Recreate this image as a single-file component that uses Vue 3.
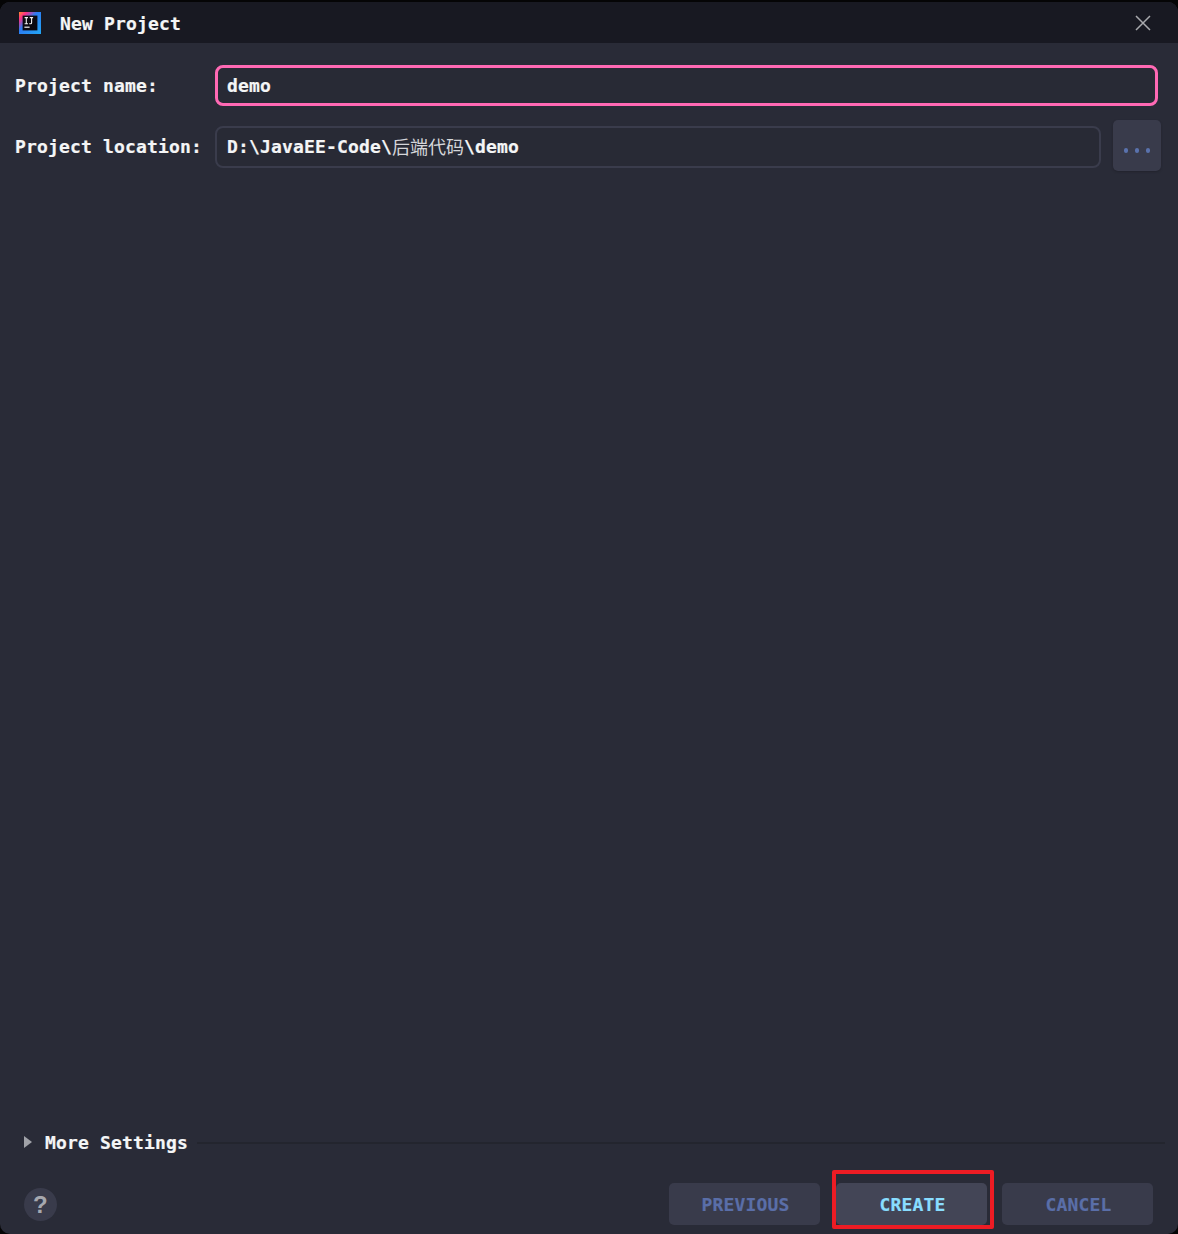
<script setup>
const labelName = 'Project name:'
const labelLocation = 'Project location:'
</script>

<template>
  <div class="window">
    <header class="titlebar">
      <svg class="logo" width="24" height="24" viewBox="0 0 24 24" aria-hidden="true">
        <defs>
          <linearGradient id="ijg" x1="0" y1="0" x2="1" y2="1">
            <stop offset="0" stop-color="#ff8a2a" />
            <stop offset="0.18" stop-color="#fe2e87" />
            <stop offset="0.42" stop-color="#2c7bf2" />
            <stop offset="1" stop-color="#22a7f5" />
          </linearGradient>
        </defs>
        <rect x="1" y="1" width="22" height="22" fill="url(#ijg)" />
        <rect x="4.6" y="4.6" width="14.8" height="14.8" fill="#0b0910" />
        <path d="M6.6 6.6h3.4M8.3 6.6v6.2M6.6 12.8h3.4M13.6 6.6v5.2q0 1-1 1h-1.4M11.7 6.6h3.4" fill="none" stroke="#f2f2f2" stroke-width="1.1" />
        <rect x="6.4" y="15.6" width="5.2" height="1.2" fill="#f2f2f2" />
      </svg>
      <span class="title">New Project</span>
      <svg class="close" width="16" height="16" viewBox="0 0 16 16" aria-hidden="true">
        <path d="M1 1l14 14M15 1L1 15" stroke="#a8a9ad" stroke-width="1.5" fill="none" />
      </svg>
    </header>

    <main class="body">
      <div class="row row-name">
        <label class="label">{{ labelName }}</label>
        <div class="input input-focus">demo</div>
      </div>
      <div class="row row-location">
        <label class="label label-shift">{{ labelLocation }}</label>
        <div class="input input-plain">D:\JavaEE-Code\<span class="cjk">后端代码</span>\demo</div>
        <button class="browse" type="button"><i></i><i></i><i></i></button>
      </div>
      <div class="spacer"></div>
      <div class="more">
        <svg width="8" height="12" viewBox="0 0 8 12" aria-hidden="true"><path d="M0 0L8 6L0 12Z" fill="#a0a2a8" /></svg>
        <span class="more-label">More Settings</span>
        <span class="rule"></span>
      </div>
      <footer class="footer">
        <div class="help">?</div>
        <div class="actions">
          <button class="btn" type="button">PREVIOUS</button>
          <div class="create-wrap">
            <button class="btn btn-primary" type="button">CREATE</button>
            <span class="highlight"></span>
          </div>
          <button class="btn" type="button">CANCEL</button>
        </div>
      </footer>
    </main>
  </div>
</template>

<style>
html, body { margin: 0; background: #050506; }
</style>

<style scoped>
.window {
  box-sizing: border-box;
  width: 1178px;
  margin-top: 2px;
  height: 1232px;
  border-radius: 10px;
  overflow: hidden;
  background: #292b37;
  display: flex;
  flex-direction: column;
  font-family: "DejaVu Sans Mono", "Noto Sans CJK SC", monospace;
  font-weight: 700;
  font-size: 18px;
  letter-spacing: 0.16px;
  color: #f4f5f6;
  -webkit-text-stroke: 0.2px currentColor;
}
.titlebar {
  height: 41px;
  flex: none;
  background: #181922;
  display: flex;
  align-items: center;
  padding: 0 27px 0 18px;
}
.logo { flex: none; }
.title { margin-left: 18px; margin-top: 2px; }
.close { margin-left: auto; }
.body {
  flex: 1;
  display: flex;
  flex-direction: column;
  min-height: 0;
}
.row { display: flex; align-items: center; padding-left: 15px; }
.row-name { margin-top: 22px; padding-right: 20px; }
.row-location { margin-top: 14px; padding-right: 17px; }
.label { width: 200px; flex: none; }
.label-shift { margin-top: 2px; }
.input {
  box-sizing: border-box;
  background: #282a35;
  display: flex;
  align-items: center;
  white-space: pre;
}
.input-focus {
  flex: 1;
  height: 41px;
  border: 3px solid #ff69b4;
  border-radius: 8px;
  padding-left: 9px;
}
.input-plain {
  flex: 1;
  height: 42px;
  margin-top: 3px;
  border: 2px solid #3a3c4c;
  border-radius: 8px;
  padding: 0 0 2px 10px;
}
.cjk {
  font-family: "Noto Sans CJK SC", sans-serif;
  font-weight: 400;
  color: #d5d6da;
  letter-spacing: 0;
  -webkit-text-stroke: 0;
}
.browse {
  box-sizing: border-box;
  flex: none;
  width: 48px;
  height: 51px;
  margin-left: 12px;
  border: 0;
  border-radius: 5px;
  background: #393b4b;
  display: flex;
  align-items: center;
  justify-content: center;
  gap: 6.5px;
  padding: 10px 0 0;
  box-shadow: 0 1px 2px #22232d;
}
.browse i { width: 4.5px; height: 4.5px; border-radius: 50%; background: #5a72ad; }
.spacer { flex: 1; }
.more {
  display: flex;
  align-items: center;
  padding: 0 13px 0 24px;
  height: 20px;
}
.more-label { margin-left: 13px; }
.rule { flex: 1; height: 2px; margin-left: 9px; background: #23252e; margin-top: 2px; }
.footer {
  display: flex;
  align-items: center;
  justify-content: space-between;
  padding: 31px 25px 9px 24px;
}
.help {
  width: 33px;
  height: 33px;
  margin-top: 1px;
  border-radius: 50%;
  background: #393b4b;
  color: #a6a8af;
  display: flex;
  align-items: center;
  justify-content: center;
  font-family: "Liberation Sans", sans-serif;
  font-size: 24px;
  -webkit-text-stroke: 0;
}
.actions { display: flex; align-items: center; }
.btn {
  box-sizing: border-box;
  width: 151px;
  height: 42px;
  border: 0;
  border-radius: 5px;
  background: #393b4b;
  color: #5a6ea8;
  font-family: "DejaVu Sans Mono", monospace;
  font-weight: 700;
  font-size: 18px;
  letter-spacing: 0.16px;
  -webkit-text-stroke: 0.2px currentColor;
  padding: 0 0 0 2px;
}
.create-wrap { position: relative; margin: 0 15px 0 16px; }
.btn-primary { display: block; background: #434556; color: #89ddff; }
.highlight {
  position: absolute;
  left: -4px;
  right: -7px;
  top: -13px;
  bottom: -4px;
  border: 4px solid #ed1c24;
  border-radius: 2px;
  pointer-events: none;
}
</style>
